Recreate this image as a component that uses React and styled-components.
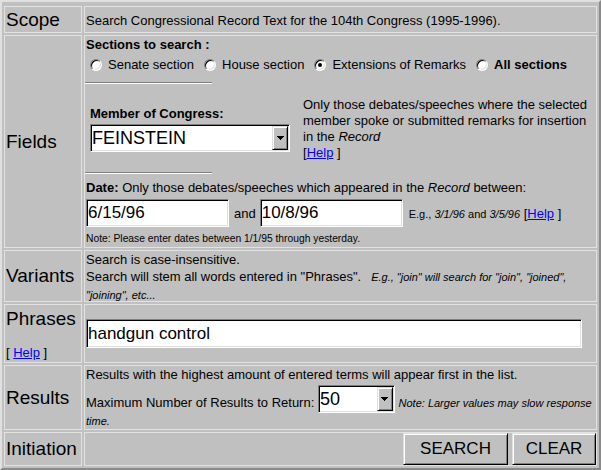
import React from 'react';
import styled, { createGlobalStyle, css } from 'styled-components';

const GlobalStyle = createGlobalStyle`
  html, body { margin: 0; padding: 0; background: #c0c0c0; }
  body { font-family: "Liberation Sans", Arial, sans-serif; color: #000; }
`;

const sunken = css`
  border: 1px solid;
  border-color: #808080 #ffffff #ffffff #808080;
  box-shadow: inset 1px 1px 0 #000, inset -1px -1px 0 #dfdfdf;
`;

const raised = css`
  background: #c0c0c0;
  border: 1px solid;
  border-color: #dfdfdf #000 #000 #dfdfdf;
  box-shadow: inset 1px 1px 0 #fff, inset -1px -1px 0 #808080;
`;

const Table = styled.div`
  display: grid;
  grid-template-columns: 78px 513px;
  grid-template-rows: 27px 213px 52px 59px 65px 34px;
  gap: 2px;
  width: 601px;
  height: 470px;
  box-sizing: border-box;
  padding: 4px 2px 2px 2px;
  border: 2px solid;
  border-color: #e0e0e0 #8a8a8a #8a8a8a #e0e0e0;
  background: #c0c0c0;
`;

const Cell = styled.div`
  box-sizing: border-box;
  min-width: 0;
  border: 1px solid #e2e2e2;
`;

const Label = styled(Cell)`
  display: flex;
  flex-direction: column;
  justify-content: center;
  padding: 0 1px;
  font-size: 19px;
  line-height: 22px;
`;

const LabelHelp = styled.div`
  font-size: 13px;
  line-height: 15px;
  margin-top: 15px;
`;

const Body = styled(Cell)`
  padding: 0 1px;
  font-size: 13px;
  line-height: 15px;
`;

const ScopeBody = styled(Body)`
  display: flex;
  align-items: center;
  padding-top: 2px;
`;

const FieldsBody = styled(Body)`
  display: flex;
  flex-direction: column;
  align-items: flex-start;
  padding-top: 1px;
`;

const VariantsBody = styled(Body)`
  line-height: 17px;
`;

const PhrasesBody = styled(Body)`
  display: flex;
  align-items: center;
`;

const ResultsBody = styled(Body)`
  padding-top: 1px;
`;

const InitiationBody = styled(Body)`
  display: flex;
  justify-content: flex-end;
  align-items: stretch;
  gap: 4px;
  padding: 0;
`;

const Bold = styled.b`
  font-weight: bold;
`;

const Link = styled.a`
  color: #0000ff;
  text-decoration: underline;
  cursor: pointer;
`;

const RadioRow = styled.div`
  display: flex;
  align-items: center;
  gap: 10px;
  height: 16px;
  line-height: 16px;
  margin-top: 5px;
  padding-left: 4px;
`;

const RadioOption = styled.label`
  display: flex;
  align-items: center;
  font-weight: ${p => (p.$strong ? 'bold' : 'normal')};
`;

const RadioDot = styled.span`
  position: relative;
  display: inline-block;
  box-sizing: border-box;
  flex: none;
  width: 12px;
  height: 12px;
  margin-right: 6px;
  border-radius: 50%;
  background: #fff;
  border: 1px solid;
  border-color: #808080 #fff #fff #808080;
  box-shadow: inset 1px 1px 0 #000, inset -1px -1px 0 #dfdfdf;
  ${p =>
    p.$checked &&
    css`
      &::after {
        content: '';
        position: absolute;
        left: 3px;
        top: 3px;
        width: 4px;
        height: 4px;
        border-radius: 50%;
        background: #000;
      }
    `}
`;

const Rule = styled.div`
  width: 127px;
  height: 0;
  margin-top: ${p => p.$top}px;
  margin-left: -1px;
  border-top: 1px solid #808080;
  border-bottom: 1px solid #fff;
`;

const MemberBlock = styled.div`
  display: flex;
  align-items: center;
  margin-top: 13px;
`;

const MemberPick = styled.div`
  display: flex;
  flex-direction: column;
  align-items: flex-start;
  width: 200px;
  margin-left: 4px;
  margin-right: 13px;
`;

const MemberLabel = styled.div`
  font-weight: bold;
  margin-bottom: 3px;
`;

const MemberNote = styled.div`
  width: 290px;
  line-height: 16px;
`;

const SelectBox = styled.span`
  ${sunken}
  box-sizing: border-box;
  display: inline-flex;
  align-items: stretch;
  vertical-align: 2px;
  width: ${p => p.$w}px;
  height: 28px;
  padding: 1px;
  background: #fff;
`;

const SelectValue = styled.span`
  flex: 1;
  font-size: 18px;
  line-height: 24px;
  white-space: nowrap;
`;

const ArrowButton = styled.span`
  ${raised}
  box-sizing: border-box;
  display: flex;
  align-items: center;
  justify-content: center;
  width: 16px;
`;

const DateLine = styled.div`
  margin-top: 6px;
`;

const DateRow = styled.div`
  display: flex;
  align-items: baseline;
  margin-top: 4px;
`;

const TextField = styled.input`
  ${sunken}
  box-sizing: border-box;
  width: ${p => p.$w}px;
  height: ${p => p.$h || 28}px;
  margin: 0;
  padding: 0 1px;
  background: #fff;
  color: #000;
  font-family: "Liberation Sans", Arial, sans-serif;
  font-size: 17px;
  outline: none;
`;

const AndText = styled.span`
  margin: 0 4px 0 5px;
`;

const Example = styled.span`
  margin-left: 6px;
  font-size: 11px;
`;

const SmallNote = styled.div`
  margin-top: 6px;
  font-size: 10.3px;
  line-height: 12px;
`;

const SmallItalic = styled.i`
  font-size: 11px;
  font-style: italic;
  margin-left: ${p => p.$gap || 0}px;
`;

const ResultsLine = styled.div`
  margin-top: ${p => p.$top || 0}px;
`;

const PushButton = styled.button`
  ${raised}
  box-sizing: border-box;
  width: ${p => p.$w}px;
  margin: 0;
  padding: 0;
  font-family: "Liberation Sans", Arial, sans-serif;
  font-size: 17px;
  color: #000;
  cursor: pointer;
`;

const DownArrow = () => (
  <svg width="7" height="4" viewBox="0 0 7 4" shapeRendering="crispEdges">
    <path d="M0 0h7v1H6v1H5v1H4v1H3V3H2V2H1V1H0z" fill="#000" />
  </svg>
);

const Select = ({ value, width }) => (
  <SelectBox $w={width}>
    <SelectValue>{value}</SelectValue>
    <ArrowButton>
      <DownArrow />
    </ArrowButton>
  </SelectBox>
);

const Radio = ({ checked, strong, children }) => (
  <RadioOption $strong={strong}>
    <RadioDot $checked={checked} />
    {children}
  </RadioOption>
);

export default function App() {
  return (
    <>
      <GlobalStyle />
      <Table>
        <Label>Scope</Label>
        <ScopeBody>Search Congressional Record Text for the 104th Congress (1995-1996).</ScopeBody>

        <Label>Fields</Label>
        <FieldsBody>
          <Bold>Sections to search :</Bold>
          <RadioRow>
            <Radio>Senate section</Radio>
            <Radio>House section</Radio>
            <Radio checked>Extensions of Remarks</Radio>
            <Radio strong>All sections</Radio>
          </RadioRow>
          <Rule $top={9} />
          <MemberBlock>
            <MemberPick>
              <MemberLabel>Member of Congress:</MemberLabel>
              <Select value="FEINSTEIN" width={200} />
            </MemberPick>
            <MemberNote>
              Only those debates/speeches where the selected member spoke or submitted remarks for
              insertion in the <i>Record</i>
              <br />[<Link>Help</Link> ]
            </MemberNote>
          </MemberBlock>
          <Rule $top={11} />
          <DateLine>
            <Bold>Date:</Bold> Only those debates/speeches which appeared in the <i>Record</i> between:
          </DateLine>
          <DateRow>
            <TextField $w={143} defaultValue="6/15/96" />
            <AndText>and</AndText>
            <TextField $w={143} defaultValue="10/8/96" />
            <Example>
              E.g., <i>3/1/96</i> and <i>3/5/96</i>{' '}
            </Example>
            <span>
              &nbsp;[<Link>Help</Link> ]
            </span>
          </DateRow>
          <SmallNote>Note: Please enter dates between 1/1/95 through yesterday.</SmallNote>
        </FieldsBody>

        <Label>Variants</Label>
        <VariantsBody>
          Search is case-insensitive.
          <br />
          Search will stem all words entered in "Phrases".
          <SmallItalic $gap={10}>
            E.g., "join" will search for "join", "joined", "joining", etc...
          </SmallItalic>
        </VariantsBody>

        <Label>
          Phrases
          <LabelHelp>
            [ <Link>Help</Link> ]
          </LabelHelp>
        </Label>
        <PhrasesBody>
          <TextField $w={496} $h={29} defaultValue="handgun control" />
        </PhrasesBody>

        <Label>Results</Label>
        <ResultsBody>
          <ResultsLine>Results with the highest amount of entered terms will appear first in the list.</ResultsLine>
          <ResultsLine $top={3}>
            Maximum Number of Results to Return: <Select value="50" width={77} />{' '}
            <SmallItalic>Note: Larger values may slow response time.</SmallItalic>
          </ResultsLine>
        </ResultsBody>

        <Label>Initiation</Label>
        <InitiationBody>
          <PushButton $w={105}>SEARCH</PushButton>
          <PushButton $w={84}>CLEAR</PushButton>
        </InitiationBody>
      </Table>
    </>
  );
}
